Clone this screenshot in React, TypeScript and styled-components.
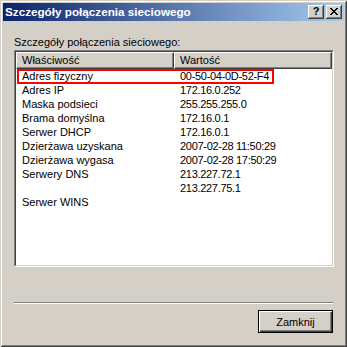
import React from 'react';
import styled, { createGlobalStyle } from 'styled-components';

const GlobalStyle = createGlobalStyle`
  html, body {
    margin: 0;
    padding: 0;
    background: #d4d0c8;
  }
  body {
    font-family: 'Liberation Sans', Arial, sans-serif;
    font-size: 11px;
    color: #000;
  }
`;

interface Detail {
  name: string;
  value: string;
  highlighted?: boolean;
}

const details: Detail[] = [
  { name: 'Adres fizyczny', value: '00-50-04-0D-52-F4', highlighted: true },
  { name: 'Adres IP', value: '172.16.0.252' },
  { name: 'Maska podsieci', value: '255.255.255.0' },
  { name: 'Brama domyślna', value: '172.16.0.1' },
  { name: 'Serwer DHCP', value: '172.16.0.1' },
  { name: 'Dzierżawa uzyskana', value: '2007-02-28 11:50:29' },
  { name: 'Dzierżawa wygasa', value: '2007-02-28 17:50:29' },
  { name: 'Serwery DNS', value: '213.227.72.1' },
  { name: '', value: '213.227.75.1' },
  { name: 'Serwer WINS', value: '' },
];

const App = (): JSX.Element => {
  return (
    <>
      <GlobalStyle />
      <Window>
        <TitleBar>
          <TitleText>Szczegóły połączenia sieciowego</TitleText>
          <CaptionButton gap={0}>
            <HelpGlyph>?</HelpGlyph>
          </CaptionButton>
          <CaptionButton gap={2}>
            <svg width="8" height="7" viewBox="0 0 8 7" shapeRendering="crispEdges">
              <path
                fill="#000"
                d="M0 0h2v1H0zM6 0h2v1H6zM1 1h2v1H1zM5 1h2v1H5zM2 2h4v1H2zM3 3h2v1H3zM2 4h4v1H2zM1 5h2v1H1zM5 5h2v1H5zM0 6h2v1H0zM6 6h2v1H6z"
              />
            </svg>
          </CaptionButton>
        </TitleBar>

        <Body>
          <Label>Szczegóły połączenia sieciowego:</Label>
          <ListOuter>
            <ListInner>
              <Header>
                <HeaderCell>Właściwość</HeaderCell>
                <HeaderCell>Wartość</HeaderCell>
              </Header>
              {details.map((d, i) => (
                <Row key={i}>
                  <Cell>{d.name}</Cell>
                  <Cell numeric>{d.value}</Cell>
                  {d.highlighted && <Highlight />}
                </Row>
              ))}
            </ListInner>
          </ListOuter>

          <Separator />
          <ButtonRow>
            <PushButton isDefault>Zamknij</PushButton>
          </ButtonRow>
        </Body>
      </Window>
    </>
  );
};

export default App;


const Window = styled.div`
  width: 347px;
  height: 347px;
  box-sizing: border-box;
  padding: 3px;
  background: #d4d0c8;
  box-shadow: inset 1px 1px #d4d0c8, inset -1px -1px #404040,
    inset 2px 2px #ffffff, inset -2px -2px #808080;
  display: flex;
  flex-direction: column;
`;

const TitleBar = styled.div`
  height: 18px;
  display: flex;
  align-items: center;
  padding: 0 2px;
  background: linear-gradient(to right, #0a246a, #a6caf0);
`;

const TitleText = styled.div`
  flex: 1;
  color: #fff;
  font-weight: bold;
  font-size: 11.7px;
  line-height: 18px;
  white-space: nowrap;
  overflow: hidden;
`;

const CaptionButton = styled.div<{ gap: number }>`
  width: 16px;
  height: 14px;
  margin-left: ${(p) => p.gap}px;
  box-sizing: border-box;
  background: #d4d0c8;
  box-shadow: inset -1px -1px #404040, inset 1px 1px #ffffff,
    inset -2px -2px #808080;
  display: flex;
  align-items: center;
  justify-content: center;
  padding-bottom: 1px;
`;

const HelpGlyph = styled.span`
  font-weight: bold;
  font-size: 11px;
  line-height: 11px;
  color: #000;
`;

const Body = styled.div`
  display: flex;
  flex-direction: column;
  padding: 14px 10px 0 11px;
`;

const Label = styled.div`
  height: 14px;
  line-height: 14px;
  margin-bottom: 1px;
`;

const ListOuter = styled.div`
  width: 320px;
  height: 217px;
  box-sizing: border-box;
  border-top: 1px solid #808080;
  border-left: 1px solid #808080;
  border-right: 1px solid #ffffff;
  border-bottom: 1px solid #ffffff;
`;

const ListInner = styled.div`
  height: 100%;
  box-sizing: border-box;
  background: #fff;
  border-top: 1px solid #404040;
  border-left: 1px solid #404040;
  border-right: 1px solid #d4d0c8;
  border-bottom: 1px solid #d4d0c8;
`;

const Header = styled.div`
  display: grid;
  grid-template-columns: 158px 158px;
`;

const HeaderCell = styled.div`
  height: 17px;
  box-sizing: border-box;
  background: #d4d0c8;
  border-top: 1px solid #fff;
  border-left: 1px solid #fff;
  border-right: 1px solid #404040;
  border-bottom: 1px solid #404040;
  box-shadow: inset -1px -1px #808080;
  padding-left: 5px;
  line-height: 15px;
  white-space: nowrap;
`;

const Row = styled.div`
  position: relative;
  display: grid;
  grid-template-columns: 158px 158px;
  height: 14px;
  line-height: 14px;
`;

const Cell = styled.div<{ numeric?: boolean }>`
  padding-left: 6px;
  white-space: nowrap;
  letter-spacing: ${(p) => (p.numeric ? '-0.3px' : '0')};
`;

const Highlight = styled.div`
  position: absolute;
  left: 1px;
  top: 0;
  width: 257px;
  height: 15px;
  box-sizing: border-box;
  border: 2px solid #ff0000;
`;

const Separator = styled.div`
  width: 319px;
  height: 2px;
  box-sizing: border-box;
  margin-top: 35px;
  border-top: 1px solid #808080;
  border-bottom: 1px solid #ffffff;
`;

const ButtonRow = styled.div`
  width: 319px;
  display: flex;
  justify-content: flex-end;
  margin-top: 6px;
`;

const PushButton = styled.button<{ isDefault?: boolean }>`
  width: 75px;
  height: 23px;
  box-sizing: border-box;
  padding: 0;
  background: #d4d0c8;
  font-family: 'Liberation Sans', Arial, sans-serif;
  font-size: 11px;
  color: #000;
  border: 1px solid ${(p) => (p.isDefault ? '#000' : '#d4d0c8')};
  box-shadow: inset 1px 1px #ffffff, inset -1px -1px #404040,
    inset -2px -2px #808080;
  border-radius: 0;
`;
